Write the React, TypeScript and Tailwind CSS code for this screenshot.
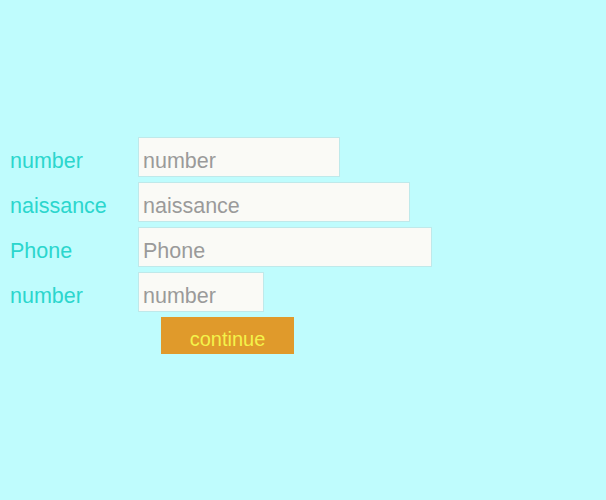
import React from 'react';

const rows = [
  { label: 'number', width: 'w-[202px]' },
  { label: 'naissance', width: 'w-[272px]' },
  { label: 'Phone', width: 'w-[294px]' },
  { label: 'number', width: 'w-[126px]' },
];

export default function App() {
  return (
    <div className="min-h-[500px] w-full bg-[#bffcfd] px-[10px] pt-[137px] font-['Liberation_Sans',Arial,sans-serif]">
      <div className="flex flex-col gap-[5px]">
        {rows.map((r, i) => (
          <div key={i} className="flex items-center">
            <label className="w-[128px] pt-[10px] text-[21.5px] leading-none text-[#2bd6cd]">{r.label}</label>
            <input
              placeholder={r.label}
              className={`${r.width} h-[40px] border border-[#bfe9ea] bg-[#fafaf6] pl-[4px] pt-[9px] text-[21.5px] text-gray-600 placeholder:text-[#9a9a9a] outline-none`}
            />
          </div>
        ))}
        <button className="ml-[151px] h-[37px] w-[133px] bg-[#e09a2b] pt-[6px] text-[20px] text-[#f4f24a]">
          continue
        </button>
      </div>
    </div>
  );
}
